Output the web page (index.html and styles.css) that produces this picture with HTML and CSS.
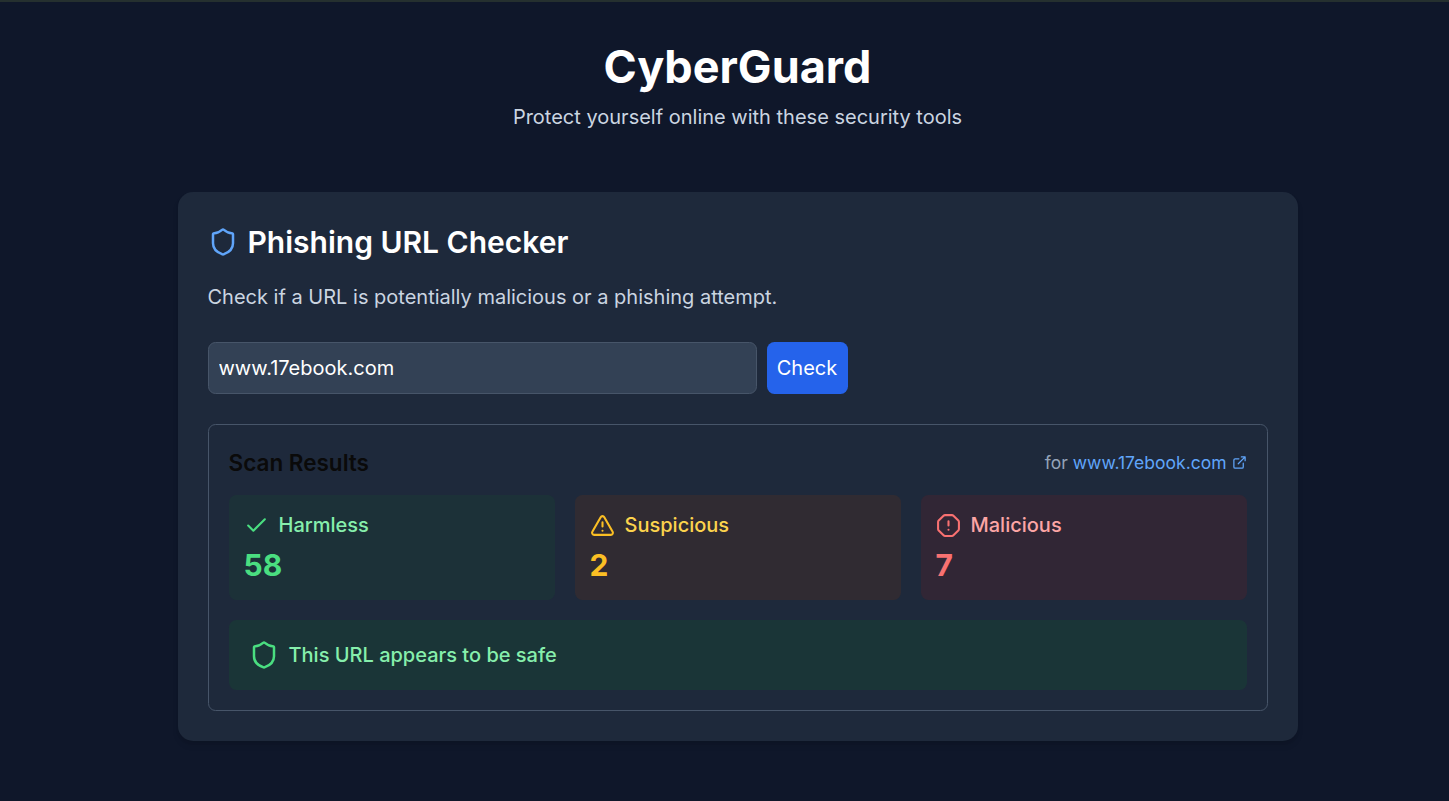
FILE: index.html
```html
<!DOCTYPE html>
<html lang="en">
<head>
<meta charset="utf-8">
<title>CyberGuard</title>
<link rel="stylesheet" href="styles.css">
</head>
<body>
<main class="page">
  <header class="hero">
    <h1 class="hero-title">CyberGuard</h1>
    <p class="hero-sub">Protect yourself online with these security tools</p>
  </header>
  <section class="card">
    <h2 class="card-title">
      <svg class="icon icon-lg blue" viewBox="0 0 24 24"><path d="M20 13c0 5-3.5 7.5-7.66 8.95a1 1 0 0 1-.67-.01C7.5 20.5 4 18 4 13V6a1 1 0 0 1 1-1c2 0 4.500-1.200 6.240-2.720a1.170 1.170 0 0 1 1.520 0C14.510 3.810 17 5 19 5a1 1 0 0 1 1 1z"/></svg>
      Phishing URL Checker
    </h2>
    <p class="card-text">Check if a URL is potentially malicious or a phishing attempt.</p>
    <form class="check-form">
      <input class="url-input" type="text" value="www.17ebook.com" spellcheck="false">
      <button class="check-button" type="button">Check</button>
    </form>
    <div class="results">
      <div class="results-head">
        <h3 class="results-title">Scan Results</h3>
        <span class="results-target">for&nbsp;<a class="results-link">www.17ebook.com<svg class="icon icon-xs" viewBox="0 0 24 24"><path d="M15 3h6v6M10 14 21 3M18 13v6a2 2 0 0 1-2 2H5a2 2 0 0 1-2-2V8a2 2 0 0 1 2-2h6"/></svg></a></span>
      </div>
      <div class="stats">
        <div class="stat stat-harmless">
          <div class="stat-label"><svg class="icon icon-md" viewBox="0 0 24 24"><path d="M20 6 9 17l-5-5"/></svg><span>Harmless</span></div>
          <div class="stat-value">58</div>
        </div>
        <div class="stat stat-suspicious">
          <div class="stat-label"><svg class="icon icon-md" viewBox="0 0 24 24"><path d="m21.730 18-8-14a2 2 0 0 0-3.480 0l-8 14A2 2 0 0 0 4 21h16a2 2 0 0 0 1.730-3M12 9v4M12 17h.01"/></svg><span>Suspicious</span></div>
          <div class="stat-value">2</div>
        </div>
        <div class="stat stat-malicious">
          <div class="stat-label"><svg class="icon icon-md" viewBox="0 0 24 24"><path d="M12 16h.01M12 8v4M15.312 2a2 2 0 0 1 1.414.586l4.688 4.688A2 2 0 0 1 22 8.688v6.624a2 2 0 0 1-.586 1.414l-4.688 4.688a2 2 0 0 1-1.414.586H8.688a2 2 0 0 1-1.414-.586l-4.688-4.688A2 2 0 0 1 2 15.312V8.688a2 2 0 0 1 .586-1.414l4.688-4.688A2 2 0 0 1 8.688 2z"/></svg><span>Malicious</span></div>
          <div class="stat-value">7</div>
        </div>
      </div>
      <div class="verdict">
        <svg class="icon icon-lg green" viewBox="0 0 24 24"><path d="M20 13c0 5-3.5 7.5-7.66 8.95a1 1 0 0 1-.67-.01C7.5 20.5 4 18 4 13V6a1 1 0 0 1 1-1c2 0 4.500-1.200 6.240-2.720a1.170 1.170 0 0 1 1.520 0C14.510 3.810 17 5 19 5a1 1 0 0 1 1 1z"/></svg>
        <span>This URL appears to be safe</span>
      </div>
    </div>
  </section>
</main>
</body>
</html>
```

FILE: styles.css
```css
* {
  box-sizing: border-box;
  margin: 0;
}

html {
  height: 100%;
  overflow: hidden;
}

body {
  height: 100%;
  overflow: hidden;
  background: #0f172a;
  border-top: 2px solid #25302f;
  font: 20px/30px Inter, sans-serif;
  color: #0a0a0a;
}

.page {
  width: 1475px;
  padding: 40px;
}

.hero {
  text-align: center;
  margin-bottom: 60px;
}

.hero-title {
  font-size: 45px;
  line-height: 50px;
  font-weight: 700;
  color: #fff;
  margin-bottom: 10px;
}

.hero-sub {
  color: #cbd5e1;
}

.card {
  width: 1120px;
  margin: 0 auto;
  padding: 30px;
  border-radius: 15px;
  background: #1e293b;
  box-shadow: 0 5px 7.5px -1px rgba(0, 0, 0, 0.1), 0 2.5px 5px -2.5px rgba(0, 0, 0, 0.1);
}

.card-title {
  display: flex;
  align-items: center;
  gap: 10px;
  font-size: 30px;
  line-height: 40px;
  font-weight: 600;
  color: #fff;
  margin-bottom: 20px;
}

.card-text {
  color: #cbd5e1;
  margin-bottom: 30px;
}

.check-form {
  display: flex;
  gap: 10px;
  width: 640px;
  margin-bottom: 30px;
}

.url-input {
  flex: 1;
  min-width: 0;
  height: 52px;
  padding: 10px;
  border: 1px solid #475569;
  border-radius: 7.5px;
  background: #334155;
  color: #fff;
  font: inherit;
}

.check-button {
  width: 81px;
  padding: 0;
  border: 0;
  border-radius: 7.5px;
  background: #2563eb;
  color: #fff;
  font: inherit;
}

.results {
  padding: 20px;
  border: 1px solid #475569;
  border-radius: 7.5px;
}

.results-head {
  display: flex;
  align-items: center;
  justify-content: space-between;
  height: 35px;
  margin-bottom: 15px;
}

.results-title {
  font-size: 22.5px;
  line-height: 35px;
  font-weight: 600;
}

.results-target {
  display: flex;
  align-items: center;
  font-size: 17.5px;
  line-height: 25px;
  color: #94a3b8;
}

.results-link {
  display: flex;
  align-items: center;
  gap: 5px;
  color: #60a5fa;
}

.stats {
  display: grid;
  grid-template-columns: repeat(3, 1fr);
  gap: 20px;
  margin-bottom: 20px;
}

.stat {
  padding: 15px;
  border-radius: 7.5px;
}

.stat-label {
  display: flex;
  align-items: center;
  gap: 10px;
  font-weight: 500;
  margin-bottom: 5px;
}

.stat-value {
  font-size: 30px;
  line-height: 40px;
  font-weight: 700;
}

.stat-harmless {
  background: rgba(20, 83, 45, 0.2);
  color: #4ade80;
}

.stat-harmless span {
  color: #86efac;
}

.stat-suspicious {
  background: rgba(120, 53, 15, 0.2);
  color: #fbbf24;
}

.stat-suspicious span {
  color: #fcd34d;
}

.stat-malicious {
  background: rgba(127, 29, 29, 0.2);
  color: #f87171;
}

.stat-malicious span {
  color: #fca5a5;
}

.verdict {
  display: flex;
  align-items: center;
  gap: 10px;
  padding: 20px;
  border-radius: 7.5px;
  background: rgba(20, 83, 45, 0.3);
  color: #86efac;
  font-weight: 500;
}

.icon {
  flex: none;
  fill: none;
  stroke: currentColor;
  stroke-width: 2;
  stroke-linecap: round;
  stroke-linejoin: round;
}

.icon-lg {
  width: 30px;
  height: 30px;
}

.icon-md {
  width: 25px;
  height: 25px;
}

.icon-xs {
  width: 15px;
  height: 15px;
}

.blue {
  color: #60a5fa;
}

.green {
  color: #4ade80;
}
```
